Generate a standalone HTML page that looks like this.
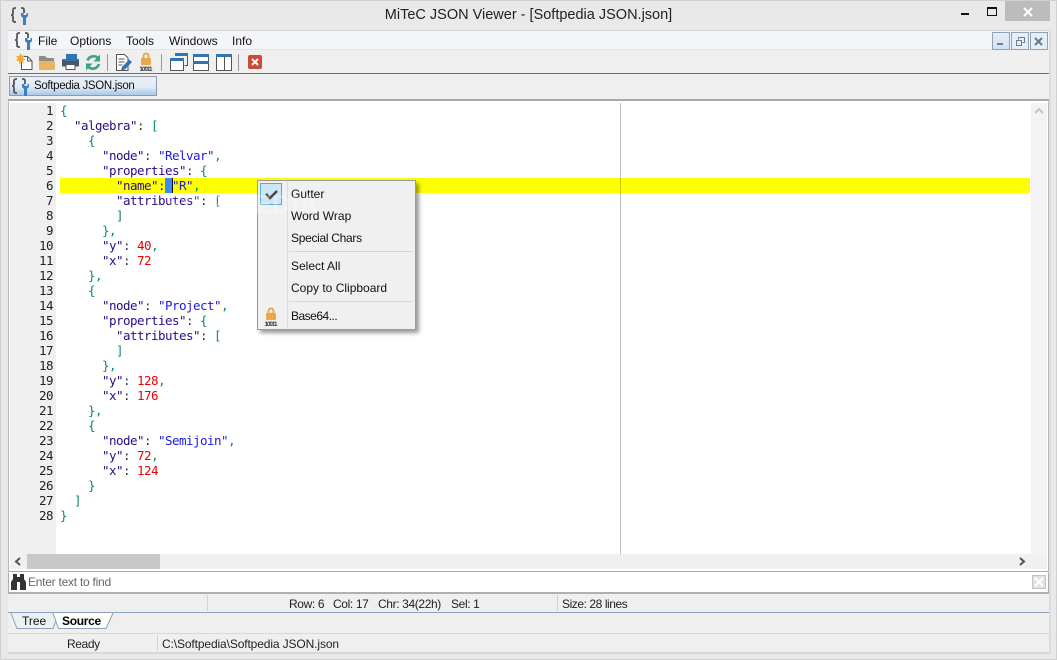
<!DOCTYPE html>
<html><head><meta charset="utf-8">
<style>
html,body{margin:0;padding:0;width:1057px;height:660px;overflow:hidden;background:#e9e9e9}
body{position:relative;font-family:"Liberation Sans",sans-serif;font-size:12px;color:#111}
.a{position:absolute}
.t{position:absolute;white-space:nowrap;line-height:14px}
.ln{position:absolute;left:10px;width:43px;text-align:right;font:12.5px/15px "DejaVu Sans Mono",monospace;color:#222;letter-spacing:-.525px}
.c{position:absolute;left:60px;font:12.5px/15px "DejaVu Sans Mono",monospace;white-space:pre;color:#2a0a8a;letter-spacing:-.525px}
.b{color:#0a8a6a}.s{color:#1a1ae0}.n{color:#f00000}.p{color:#333}
.mi{position:absolute;left:33px;font-size:12px;line-height:14px;white-space:nowrap;color:#111}
.st{color:#222;letter-spacing:-.37px}
</style></head><body>
<!-- window frame -->
<div class="a" style="left:0;top:0;width:1055px;height:658px;border:1px solid #d0d0d0"></div>
<svg class="a" style="left:10px;top:6px" width="20" height="20" fill="none"><path d="M6 2H5Q3 2 3 4V7Q3 9 1 9Q3 9 3 11V14Q3 16 5 16H6" stroke="#555" stroke-width="1.800"/><path d="M11 2h1q2 0 2 2v3" stroke="#555" stroke-width="1.800"/><path d="M11 7v3l2 2v7h3v-7l2-2V7h-1.500v2h-3V7z" fill="#3a7fc0"/></svg>
<div class="t" style="left:0;width:1057px;text-align:center;top:7px;font-size:14.5px;line-height:17px;color:#222">MiTeC JSON Viewer - [Softpedia JSON.json]</div>
<div class="a" style="left:961px;top:13px;width:8px;height:2px;background:#111"></div>
<div class="a" style="left:987px;top:7px;width:8px;height:6px;border:1px solid #111;border-top:2px solid #111"></div>
<div class="a" style="left:1005px;top:1px;width:45px;height:20px;background:#bcbcbc"></div>
<svg class="a" style="left:1023px;top:7px" width="10" height="10"><path d="M1 1L9 9M9 1L1 9" stroke="#fff" stroke-width="2"/></svg>
<!-- client -->
<div class="a" style="left:8px;top:30px;width:1041px;height:622px;background:#efefef;border-right:2px solid #dcdcdc;border-bottom:2px solid #d8d8d8"></div>
<div class="a" style="left:8px;top:30px;width:1041px;height:1px;background:#d5d5d5"></div>
<div class="a" style="left:8px;top:31px;width:1041px;height:18px;background:#f3f5f8;border-bottom:1px solid #e4e4e4"></div>
<svg class="a" style="left:14px;top:31px" width="20" height="20" fill="none"><path d="M6 2H5Q3 2 3 4V7Q3 9 1 9Q3 9 3 11V14Q3 16 5 16H6" stroke="#555" stroke-width="1.800"/><path d="M11 2h1q2 0 2 2v3" stroke="#555" stroke-width="1.800"/><path d="M11 7v3l2 2v7h3v-7l2-2V7h-1.500v2h-3V7z" fill="#3a7fc0"/></svg>
<div class="t" style="left:38px;top:34px">File</div>
<div class="t" style="left:70px;top:34px">Options</div>
<div class="t" style="left:126px;top:34px">Tools</div>
<div class="t" style="left:169px;top:34px">Windows</div>
<div class="t" style="left:232px;top:34px">Info</div>
<!-- mdi buttons -->
<div class="a" style="left:992px;top:32px;width:16px;height:16px;border:1px solid #8fa3b8;background:linear-gradient(#e6eef6,#d2e2f2)"></div>
<div class="a" style="left:997px;top:43px;width:6px;height:2px;background:#6d7f92"></div>
<div class="a" style="left:1011px;top:32px;width:16px;height:16px;border:1px solid #8fa3b8;background:#e6edf4"></div>
<svg class="a" style="left:1016px;top:37px" width="9" height="9"><path d="M2.500 2.500V.5h6v5H6.500M.5 3.500h5v5h-5z" fill="none" stroke="#6d7f92"/></svg>
<div class="a" style="left:1030px;top:32px;width:16px;height:16px;border:1px solid #8fa3b8;background:#e6edf4"></div>
<svg class="a" style="left:1034px;top:37px" width="9" height="9"><path d="M1 1L8 8M8 1L1 8" stroke="#66788a" stroke-width="2"/></svg>
<!-- toolbar icons -->
<svg class="a" style="left:14px;top:51px" width="250" height="21" viewBox="0 0 250 21">
<path d="M7.500 5.500h6l4.500 4.500v8.500H7.500z" fill="#fff" stroke="#555"/><path d="M13.500 5.500V10H18" fill="none" stroke="#555"/>
<path d="M7 2l1 3 3-1-2 3 3 1.500-3 1 1 3-3-1.500-2 2.500V10l-3-.5 2-2L2 5l3 0z" fill="#f2a93b"/>
<path d="M25 5h6l2 2h7v3H25z" fill="#8c8c8c"/><path d="M25 19V10h16v9z" fill="#e8b560"/>
<rect x="52" y="3" width="11" height="6" fill="#2f74b5"/><rect x="48" y="8" width="17" height="7.500" rx="1" fill="#4b5560"/><rect x="49" y="8" width="15" height="2" fill="#2f74b5"/><rect x="52" y="13.500" width="9" height="5" fill="#fff" stroke="#4b5560"/>
<path d="M73.500 9.500A6.500 6.500 0 0 1 84 7" fill="none" stroke="#3ba57f" stroke-width="2.600"/><path d="M86 3.500v7h-6.500z" fill="#3ba57f"/><path d="M85 13a6.500 6.500 0 0 1-10.500 3" fill="none" stroke="#3ba57f" stroke-width="2.600"/><path d="M72 19.500v-7h6.500z" fill="#3ba57f"/>
<rect x="93" y="3" width="1" height="17" fill="#999"/>
<path d="M102.500 3.500h8l3.500 3.500v12.500h-11.500z" fill="#fff" stroke="#555"/><path d="M104.500 8h6M104.500 11h6M104.500 14h4" stroke="#555"/><path d="M108 16l7-7.500 3 2.500-7 7.500-4 1z" fill="#2f74b5"/>
<rect x="127" y="7" width="10" height="7" rx="1" fill="#e8a84c"/><path d="M129.500 7V5a2.500 2.500 0 0 1 5 0v2" fill="none" stroke="#e8a84c" stroke-width="2"/><text x="125.500" y="20" font-family="Liberation Sans" font-size="6" font-weight="bold" fill="#333" textLength="13">10011</text>
<rect x="147" y="3" width="1" height="17" fill="#999"/>
<path d="M161.500 2.500h12v12h-3" fill="none" stroke="#555"/><rect x="161" y="2" width="13" height="3" fill="#2f74b5"/><rect x="156.500" y="7.500" width="13" height="12" fill="#fff" stroke="#555"/><rect x="156" y="7" width="14" height="3" fill="#2f74b5"/>
<rect x="179.500" y="3.500" width="15" height="16" fill="#fff" stroke="#555"/><rect x="179" y="3" width="16" height="3" fill="#2f74b5"/><rect x="179" y="10" width="16" height="3" fill="#2f74b5"/>
<rect x="202.500" y="3.500" width="15" height="16" fill="#fff" stroke="#555"/><rect x="202" y="3" width="16" height="3" fill="#2f74b5"/><rect x="210" y="5" width="1" height="14" fill="#555"/>
<rect x="224" y="3" width="1" height="17" fill="#999"/>
<rect x="234" y="4" width="14" height="14" rx="2" fill="#cd4a34"/><path d="M238 8l6 6M244 8l-6 6" stroke="#fff" stroke-width="2"/>
</svg>
<div class="a" style="left:8px;top:73px;width:1041px;height:1px;background:#6e6e6e"></div>
<!-- doc tab -->
<div class="a" style="left:9px;top:76px;width:146px;height:18px;border:1px solid #8f9aa6;background:linear-gradient(#e8eff7 0,#e2ebf5 55%,#a9c8e8 100%)"></div>
<svg class="a" style="left:11px;top:77px" width="20" height="20" fill="none"><path d="M6 2H5Q3 2 3 4V7Q3 9 1 9Q3 9 3 11V14Q3 16 5 16H6" stroke="#555" stroke-width="1.800"/><path d="M11 2h1q2 0 2 2v3" stroke="#555" stroke-width="1.800"/><path d="M11 7v3l2 2v7h3v-7l2-2V7h-1.500v2h-3V7z" fill="#3a7fc0"/></svg>
<div class="t" style="left:34px;top:79px;color:#111;font-size:11.5px;letter-spacing:-.33px">Softpedia JSON.json</div>
<div class="a" style="left:8px;top:99px;width:1041px;height:2px;background:#a8a8a8"></div>
<!-- editor -->
<div class="a" style="left:8px;top:101px;width:1039px;height:469px;background:#fff;border:1px solid #b8b8b8;border-bottom:2px solid #ababab;border-top:1px solid #fff"></div>
<div class="a" style="left:10px;top:103px;width:46px;height:451px;background:#f0f0f0"></div>
<div class="a" style="left:620px;top:103px;width:1px;height:451px;background:#c0c0c0"></div>
<div class="a" style="left:60px;top:178px;width:970px;height:15px;background:#ffff00"></div>
<div class="a" style="left:620px;top:178px;width:1px;height:15px;background:#c8c800"></div>
<div class="a" style="left:165px;top:178px;width:7px;height:15px;background:#3c8cf0"></div>
<div class="a" style="left:172px;top:178px;width:1px;height:15px;background:#111"></div>
<div class="ln" style="top:103px">1<br>2<br>3<br>4<br>5<br>6<br>7<br>8<br>9<br>10<br>11<br>12<br>13<br>14<br>15<br>16<br>17<br>18<br>19<br>20<br>21<br>22<br>23<br>24<br>25<br>26<br>27<br>28</div>
<div class="c" style="top:103px"><span class="b">{</span>
  "algebra"<span class="p">:</span> <span class="b">[</span>
    <span class="b">{</span>
      "node"<span class="p">:</span> <span class="s">"Relvar"</span><span class="b">,</span>
      "properties"<span class="p">:</span> <span class="b">{</span>
        "name"<span class="p">:</span> <span class="s">"R"</span><span class="b">,</span>
        "attributes"<span class="p">:</span> <span class="b">[</span>
        <span class="b">]</span>
      <span class="b">},</span>
      "y"<span class="p">:</span> <span class="n">40</span><span class="b">,</span>
      "x"<span class="p">:</span> <span class="n">72</span>
    <span class="b">},</span>
    <span class="b">{</span>
      "node"<span class="p">:</span> <span class="s">"Project"</span><span class="b">,</span>
      "properties"<span class="p">:</span> <span class="b">{</span>
        "attributes"<span class="p">:</span> <span class="b">[</span>
        <span class="b">]</span>
      <span class="b">},</span>
      "y"<span class="p">:</span> <span class="n">128</span><span class="b">,</span>
      "x"<span class="p">:</span> <span class="n">176</span>
    <span class="b">},</span>
    <span class="b">{</span>
      "node"<span class="p">:</span> <span class="s">"Semijoin"</span><span class="b">,</span>
      "y"<span class="p">:</span> <span class="n">72</span><span class="b">,</span>
      "x"<span class="p">:</span> <span class="n">124</span>
    <span class="b">}</span>
  <span class="b">]</span>
<span class="b">}</span></div>
<!-- scrollbars -->
<div class="a" style="left:1031px;top:103px;width:16px;height:451px;background:#f3f3f3"></div>
<svg class="a" style="left:1034px;top:107px" width="10" height="8"><path d="M1 6l4-4 4 4" fill="none" stroke="#c4c4c4" stroke-width="2"/></svg>
<div class="a" style="left:10px;top:554px;width:1037px;height:15px;background:#f0f0f0"></div>
<div class="a" style="left:27px;top:554px;width:133px;height:15px;background:#c8c8c8"></div>
<svg class="a" style="left:14px;top:557px" width="8" height="9"><path d="M6 1L2 4.500l4 3.500" fill="none" stroke="#555" stroke-width="2"/></svg>
<svg class="a" style="left:1018px;top:557px" width="8" height="9"><path d="M2 1l4 3.500L2 8" fill="none" stroke="#555" stroke-width="2"/></svg>
<!-- find bar -->
<div class="a" style="left:8px;top:572px;width:1039px;height:19px;background:#fff;border:1px solid #ababab;border-top:1px solid #fff;border-bottom:2px solid #b0b0b0"></div>
<svg class="a" style="left:10px;top:573px" width="17" height="18"><path d="M3 1h4v3h3V1h4v5l2 3v8h-6V9H7v8H1V9l2-3z" fill="#333"/></svg>
<div class="t" style="left:28px;top:575px;color:#666;letter-spacing:-.25px">Enter text to find</div>
<div class="a" style="left:1032px;top:575px;width:12px;height:12px;border:1px solid #c4c4c4;background:#e2e2e2"></div>
<svg class="a" style="left:1034px;top:577px" width="10" height="10"><path d="M1 1l8 8M9 1l-8 8" stroke="#fff" stroke-width="2"/></svg>
<!-- status row -->
<div class="a" style="left:207px;top:595px;width:1px;height:16px;background:#d4d4d4"></div>
<div class="a" style="left:557px;top:595px;width:1px;height:16px;background:#d4d4d4"></div>
<div class="t st" style="left:289px;top:597px">Row: 6</div>
<div class="t st" style="left:333px;top:597px">Col: 17</div>
<div class="t st" style="left:378px;top:597px">Chr: 34(22h)</div>
<div class="t st" style="left:451px;top:597px">Sel: 1</div>
<div class="t st" style="left:562px;top:597px;letter-spacing:-.43px">Size: 28 lines</div>
<div class="a" style="left:8px;top:612px;width:1041px;height:1px;background:#8aa2bc"></div>
<!-- bottom tabs -->
<svg class="a" style="left:8px;top:612px" width="112" height="21"><path d="M3 1l6 15.500h36l3-8-3-7.500" fill="#eef1f4" stroke="#8aa2bc"/><path d="M45 1l5.500 15.500h47.500l7-15.500z" fill="#fff"/><path d="M45 1l5.500 15.500h47.500l7-15.500" fill="none" stroke="#8aa2bc"/></svg>
<div class="t" style="left:22px;top:614px">Tree</div>
<div class="t" style="left:62px;top:614px;font-weight:bold;color:#000;letter-spacing:-.3px">Source</div>
<div class="a" style="left:8px;top:633px;width:1041px;height:1px;background:#d8d8d8"></div>
<div class="a" style="left:157px;top:635px;width:1px;height:16px;background:#d4d4d4"></div>
<div class="t" style="left:67px;top:637px;color:#222;letter-spacing:-.4px">Ready</div>
<div class="t" style="left:162px;top:637px;color:#222;letter-spacing:-.12px">C:\Softpedia\Softpedia JSON.json</div>
<!-- context menu -->
<div class="a" style="left:257px;top:180px;width:157px;height:148px;background:#f0f0f0;border:1px solid #9a9a9a;box-shadow:3px 3px 4px rgba(0,0,0,.4)">
 <div class="a" style="left:2px;top:2px;width:20px;height:20px;background:#cde6f7;border:1px solid #5fa8d3"></div>
 <svg class="a" style="left:7px;top:8px" width="13" height="11"><path d="M1 5l4 4 7-7" fill="none" stroke="#444" stroke-width="2.500"/></svg>
 <div class="a" style="left:29px;top:1px;width:1px;height:146px;background:#dcdcdc"></div>
 <div class="mi" style="top:6px">Gutter</div>
 <div class="mi" style="top:28px">Word Wrap</div>
 <div class="mi" style="top:50px;letter-spacing:-.3px">Special Chars</div>
 <div class="a" style="left:31px;top:70px;width:124px;height:1px;background:#d8d8d8"></div>
 <div class="mi" style="top:78px">Select All</div>
 <div class="mi" style="top:100px">Copy to Clipboard</div>
 <div class="a" style="left:31px;top:120px;width:124px;height:1px;background:#d8d8d8"></div>
 <div class="mi" style="top:128px;letter-spacing:-.5px">Base64...</div>
 <svg class="a" style="left:4px;top:125px" width="18" height="20"><rect x="4" y="7" width="10" height="7" rx="1" fill="#e8a84c"/><path d="M6.500 7V5a2.500 2.500 0 0 1 5 0v2" fill="none" stroke="#e8a84c" stroke-width="2"/><text x="2.500" y="20" font-family="Liberation Sans" font-size="6" font-weight="bold" fill="#333" textLength="13">10011</text></svg>
</div>
<div class="t" style="left:165px;top:189px;font-size:26px;line-height:30px;font-weight:bold;color:rgba(255,255,255,.28);width:172px;letter-spacing:.5px">SOFTPEDIA</div>
</body></html>
